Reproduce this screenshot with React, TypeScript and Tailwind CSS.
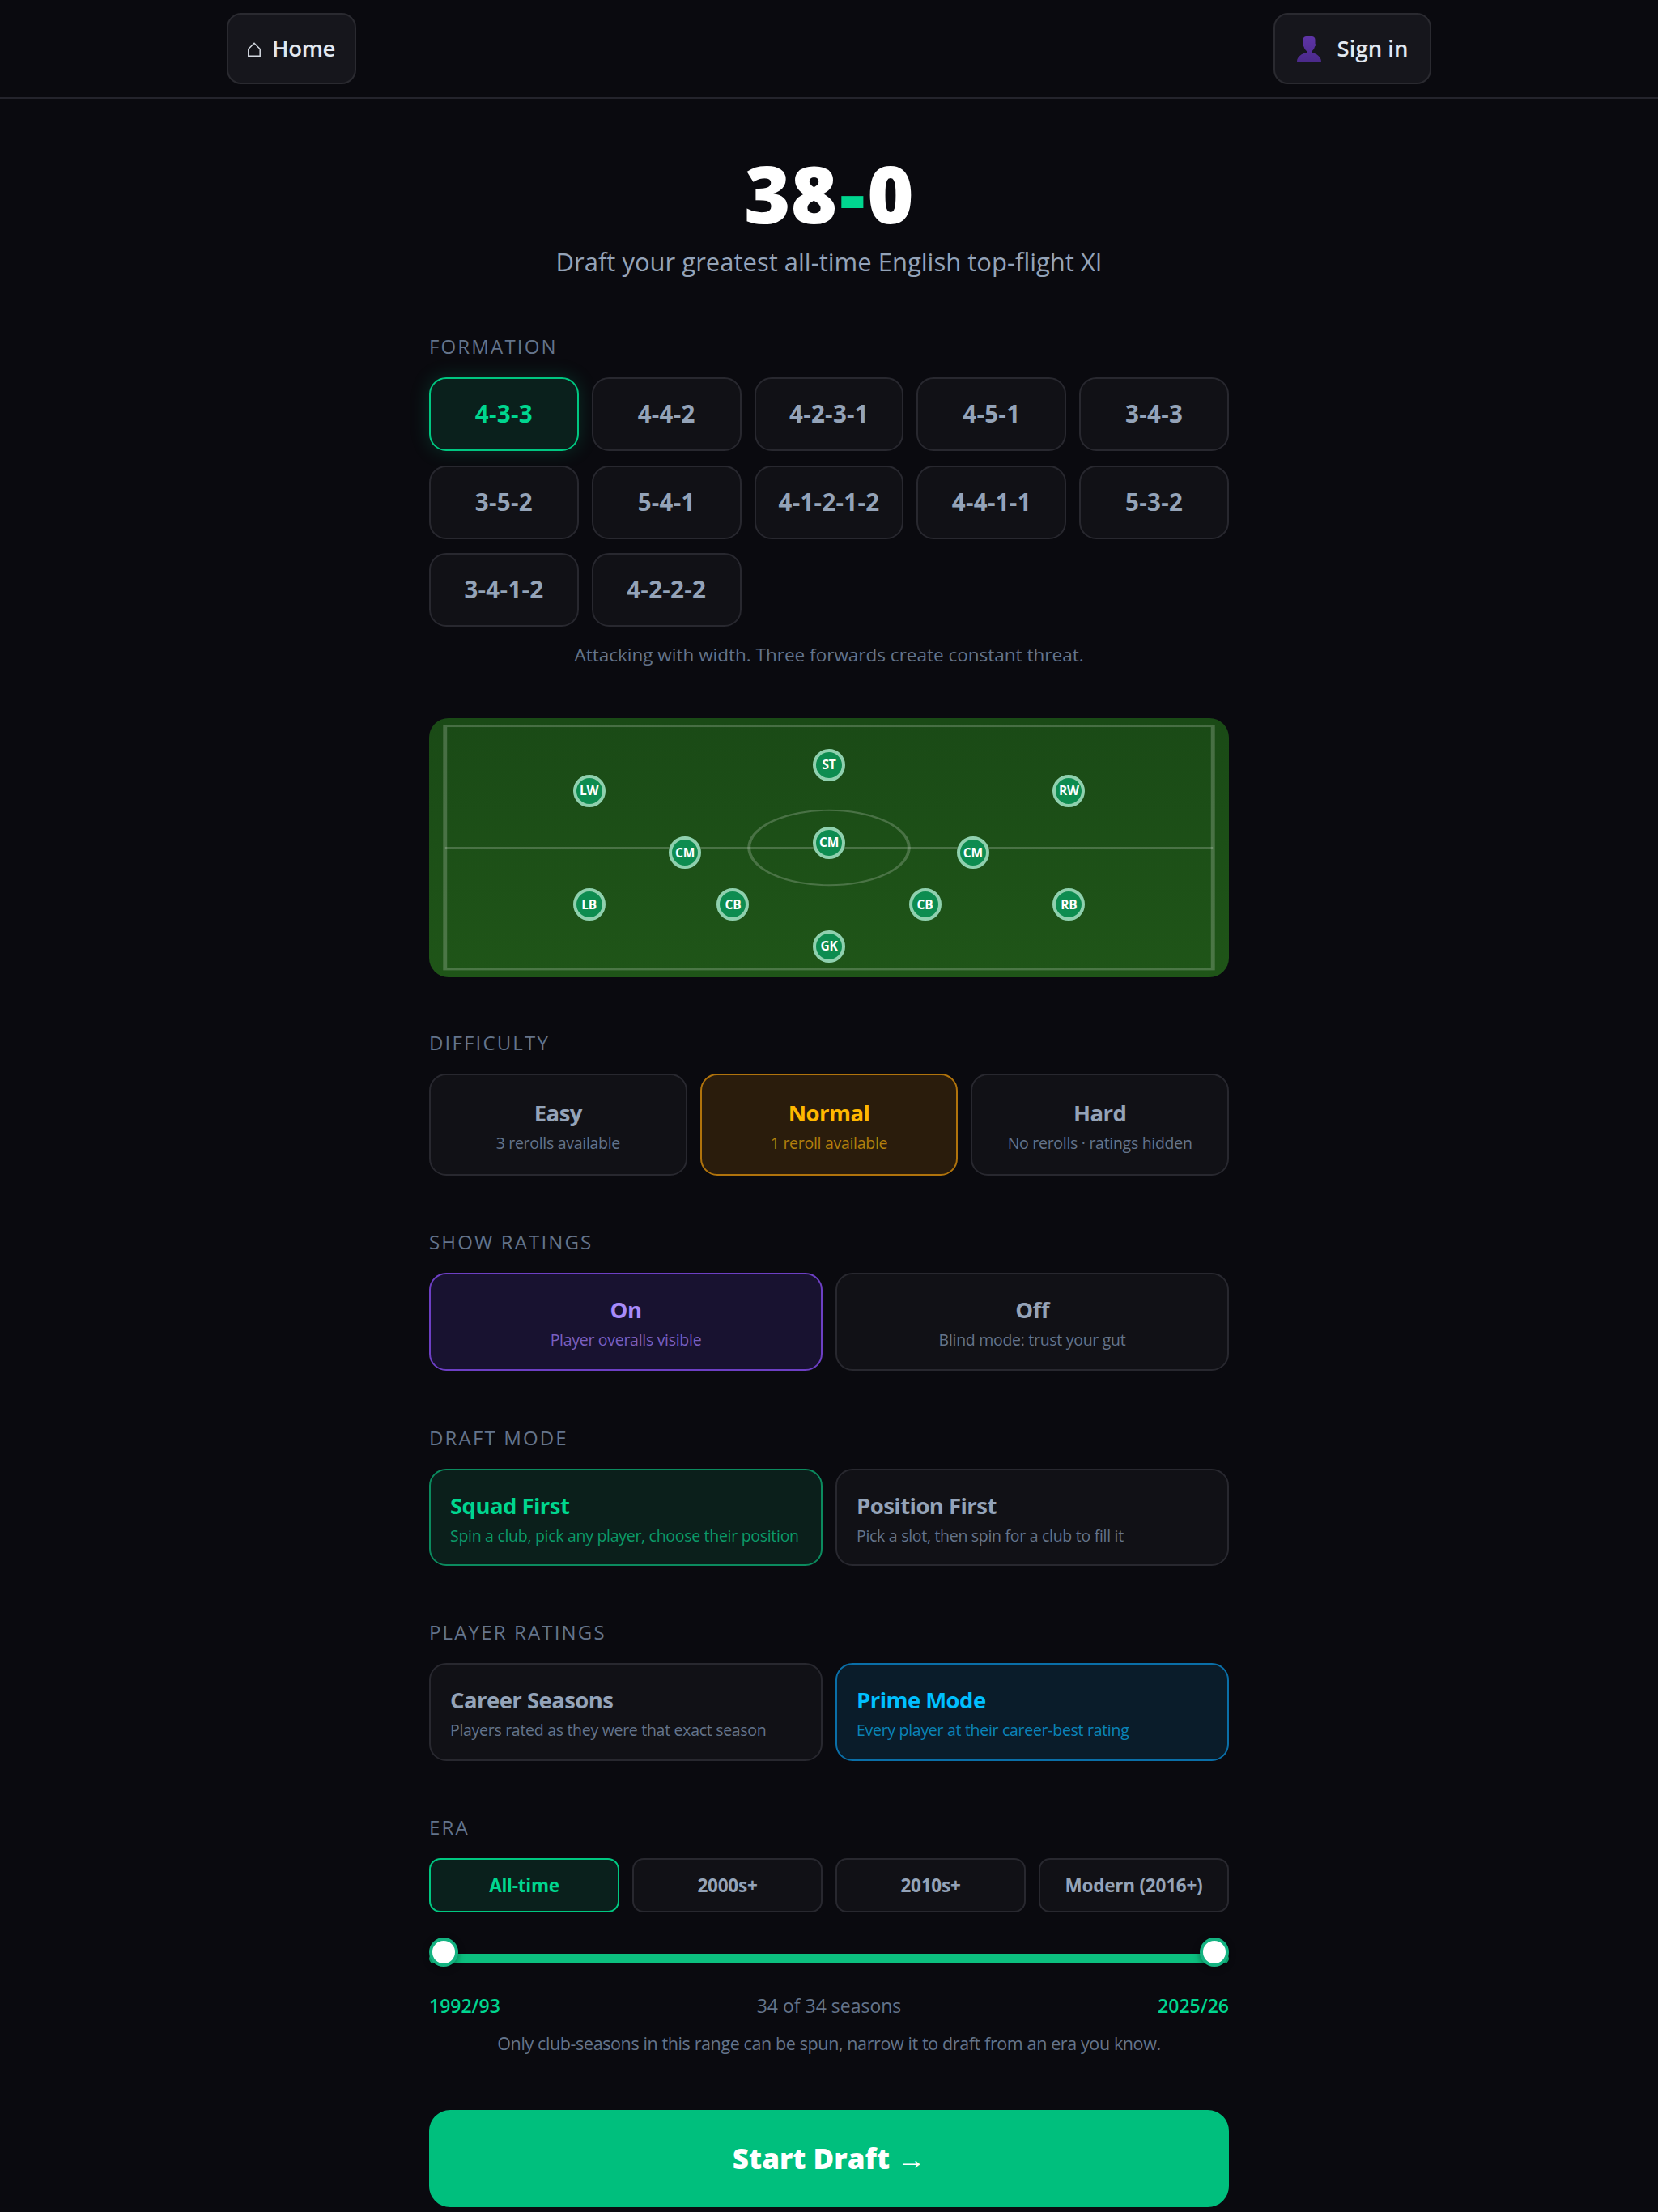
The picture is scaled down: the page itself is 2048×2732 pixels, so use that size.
const formations = ["4-3-3", "4-4-2", "4-2-3-1", "4-5-1", "3-4-3", "3-5-2", "5-4-1", "4-1-2-1-2", "4-4-1-1", "5-3-2", "3-4-1-2", "4-2-2-2"];

const nodes = [
  { label: "GK", x: 50, y: 88 },
  { label: "LB", x: 20, y: 72 },
  { label: "CB", x: 38, y: 72 },
  { label: "CB", x: 62, y: 72 },
  { label: "RB", x: 80, y: 72 },
  { label: "CM", x: 32, y: 52 },
  { label: "CM", x: 50, y: 48 },
  { label: "CM", x: 68, y: 52 },
  { label: "LW", x: 20, y: 28 },
  { label: "ST", x: 50, y: 18 },
  { label: "RW", x: 80, y: 28 },
];

const eras = ["All-time", "2000s+", "2010s+", "Modern (2016+)"];

function Label({ children }: { children: string }) {
  return <div className="h-[30px] mb-[23px] text-[24px] leading-[30px] tracking-[0.09em] text-[#64748b]">{children}</div>;
}

function Card({ title, sub, className, titleClass, subClass }: { title: string; sub: string; className: string; titleClass: string; subClass: string }) {
  return (
    <div className={`flex flex-col justify-center pt-[3px] rounded-[21px] border-2 ${className}`}>
      <div className={`text-[27.500px] leading-[38px] font-bold tracking-[-0.02em] ${titleClass}`}>{title}</div>
      <div className={`text-[19.500px] leading-[28px] mt-[4px] tracking-[-0.015em] whitespace-nowrap ${subClass}`}>{sub}</div>
    </div>
  );
}

const idle = "bg-[#111116] border-[#28282f]";
const idleTitle = "text-[#94a3b8]";
const idleSub = "text-[#64748b]";

export default function App() {
  return (
    <div className="min-h-[2732px] bg-[#0a0a0f] font-['Open_Sans',sans-serif] overflow-hidden">
      <nav className="h-[122px] border-b-2 border-[#24242c]">
        <div className="max-w-[1488px] h-full mx-auto flex items-center justify-between">
          <button className="h-[88px] w-[160px] flex items-center justify-center gap-[14px] rounded-[18px] border-2 border-[#2a2a30] bg-[#16161c] text-[27.500px] tracking-[-0.015em] font-semibold text-[#e2e8f0]">
            <svg viewBox="0 0 16 18" className="w-[16px] h-[18px] mt-[2px]" fill="none" stroke="#d5dae2" strokeWidth="1.500">
              <path d="M.8 8.500 8 1.200l7.200 7.300v8.700H.8z" />
            </svg>
            Home
          </button>
          <button className="h-[88px] w-[195px] flex items-center justify-center gap-[20px] rounded-[18px] border-2 border-[#2a2a30] bg-[#16161c] text-[27.500px] font-semibold text-[#e2e8f0]">
            <svg viewBox="0 0 30 31" className="w-[30px] h-[31px]">
              <defs>
                <linearGradient id="person" x1="0" y1="0" x2="0" y2="1">
                  <stop offset="0" stopColor="#5e34a6" />
                  <stop offset="1" stopColor="#4b2a8a" />
                </linearGradient>
              </defs>
              <path d="M7.500 4c0-2.500 2-4 4-4h7c2 0 4 1.500 4 4v5c.8.2.8 3-.5 3.500-.6 3-2.500 5-4 6v1.500C24 21 30 25 30 31H0c0-6 6-10 12.500-11v-1.500c-1.500-1-3.400-3-4-6C7.200 12 6.700 9.200 7.500 9z" fill="url(#person)" />
            </svg>
            Sign in
          </button>
        </div>
      </nav>

      <main className="w-[988px] mx-auto">
        <h1 className="mt-[60px] h-[112px] text-center font-['Noto_Sans',sans-serif] text-[98px] leading-[112px] font-black text-white">
          38<span className="mx-[3px] text-[#00d68f]">-</span>0
        </h1>
        <p className="mt-[9px] h-[40px] text-center text-[31px] leading-[40px] text-[#94a3b8]">Draft your greatest all-time English top-flight XI</p>

        <section className="mt-[70px]">
          <Label>FORMATION</Label>
          <div className="grid grid-cols-5 gap-x-[16px] gap-y-[17.500px]">
            {formations.map((f, i) => (
              <button
                key={f}
                className={`h-[91px] rounded-[21px] border-2 text-[29.500px] tracking-[0.01em] font-bold ${
                  i === 0
                    ? "bg-[#0a201c] border-[#00c781] text-[#00d68f] shadow-[0_0_24px_rgba(0,214,143,0.18)]"
                    : "bg-[#111116] border-[#28282f] text-[#94a3b8]"
                }`}
              >
                {f}
              </button>
            ))}
          </div>
          <p className="mt-[20px] h-[30px] text-center text-[22.500px] leading-[30px] text-[#64748b]">Attacking with width. Three forwards create constant threat.</p>
        </section>

        <div className="relative mt-[63px] h-[320px] rounded-[24px] bg-gradient-to-b from-[#1a4a16] to-[#1f5518] overflow-hidden">
          <svg viewBox="0 0 200 130" preserveAspectRatio="none" className="absolute inset-0 w-full h-full" fill="none" stroke="rgba(255,255,255,0.2)">
            <rect x="4" y="4" width="192" height="122" strokeWidth="1" />
            <line x1="4" y1="65" x2="196" y2="65" strokeWidth="0.8" />
            <ellipse cx="100" cy="65" rx="20" ry="18.800" strokeWidth="0.8" />
          </svg>
          {nodes.map((n, i) => (
            <div
              key={i}
              style={{ left: `${n.x}%`, top: `${n.y}%` }}
              className="absolute w-[40px] h-[40px] -ml-[20px] -mt-[20px] flex items-center justify-center rounded-full border-[4px] border-[#8fd0ae] bg-[#0d8c50] text-[15.500px] tracking-[-0.01em] font-bold text-white"
            >
              {n.label}
            </div>
          ))}
        </div>

        <section className="mt-[66px]">
          <Label>DIFFICULTY</Label>
          <div className="grid grid-cols-3 gap-[16px] h-[126px] text-center">
            <Card title="Easy" sub="3 rerolls available" className={idle} titleClass={idleTitle} subClass={idleSub} />
            <Card title="Normal" sub="1 reroll available" className="bg-[#2a1c0c] border-[#b0730c]" titleClass="text-[#ffb800]" subClass="text-[#b27f0c]" />
            <Card title="Hard" sub="No rerolls · ratings hidden" className={idle} titleClass={idleTitle} subClass={idleSub} />
          </div>
        </section>

        <section className="mt-[67px]">
          <Label>SHOW RATINGS</Label>
          <div className="grid grid-cols-2 gap-[16px] h-[121px] text-center">
            <Card title="On" sub="Player overalls visible" className="bg-[#181230] border-[#6d3fc4]" titleClass="text-[#a78bfa]" subClass="text-[#7a5fc0]" />
            <Card title="Off" sub="Blind mode: trust your gut" className={idle} titleClass={idleTitle} subClass={idleSub} />
          </div>
        </section>

        <section className="mt-[68px]">
          <Label>DRAFT MODE</Label>
          <div className="grid grid-cols-2 gap-[16px] h-[120px]">
            <Card title="Squad First" sub="Spin a club, pick any player, choose their position" className="px-[24px] bg-[#0b1f1b] border-[#0b8a5e]" titleClass="text-[#00d68f]" subClass="text-[#0b9a68]" />
            <Card title="Position First" sub="Pick a slot, then spin for a club to fill it" className={`px-[24px] ${idle}`} titleClass={idleTitle} subClass={idleSub} />
          </div>
        </section>

        <section className="mt-[67px]">
          <Label>PLAYER RATINGS</Label>
          <div className="grid grid-cols-2 gap-[16px] h-[121px]">
            <Card title="Career Seasons" sub="Players rated as they were that exact season" className={`px-[24px] ${idle}`} titleClass={idleTitle} subClass={idleSub} />
            <Card title="Prime Mode" sub="Every player at their career-best rating" className="px-[24px] bg-[#0a1c2a] border-[#0a6fa8]" titleClass="text-[#00bfff]" subClass="text-[#0a84b8]" />
          </div>
        </section>

        <section className="mt-[67px]">
          <Label>ERA</Label>
          <div className="grid grid-cols-4 gap-[16px]">
            {eras.map((e, i) => (
              <button
                key={e}
                className={`h-[67px] rounded-[14px] border-2 text-[22.500px] tracking-[-0.01em] font-bold ${
                  i === 0 ? "bg-[#0a201c] border-[#00c781] text-[#00d68f]" : "bg-[#111116] border-[#28282f] text-[#94a3b8]"
                }`}
              >
                {e}
              </button>
            ))}
          </div>

          <div className="relative mt-[51px] h-[12px] rounded-full bg-[#0cc07f]">
            <span className="absolute left-0 -top-[20px] w-[36px] h-[36px] rounded-full bg-white border-[4px] border-[#14b381] shadow-[0_2px_8px_rgba(0,0,0,0.4)]" />
            <span className="absolute right-0 -top-[20px] w-[36px] h-[36px] rounded-full bg-white border-[4px] border-[#14b381] shadow-[0_2px_8px_rgba(0,0,0,0.4)]" />
          </div>

          <div className="mt-[37px] h-[30px] flex items-center justify-between text-[23px] leading-[30px]">
            <span className="font-semibold text-[#00d68f]">1992/93</span>
            <span className="text-[#64748b]">34 of 34 seasons</span>
            <span className="font-semibold text-[#00d68f]">2025/26</span>
          </div>
          <p className="mt-[17px] h-[30px] text-center text-[21.500px] tracking-[-0.018em] leading-[30px] text-[#64748b]">Only club-seasons in this range can be spun, narrow it to draft from an era you know.</p>
        </section>

        <button className="mt-[67px] w-full h-[120px] pt-[2px] rounded-[26px] bg-[#00bf7d] text-[35px] font-extrabold text-white">
          Start Draft <span className="font-['Liberation_Sans',sans-serif] font-normal">→</span>
        </button>
      </main>
    </div>
  );
}
